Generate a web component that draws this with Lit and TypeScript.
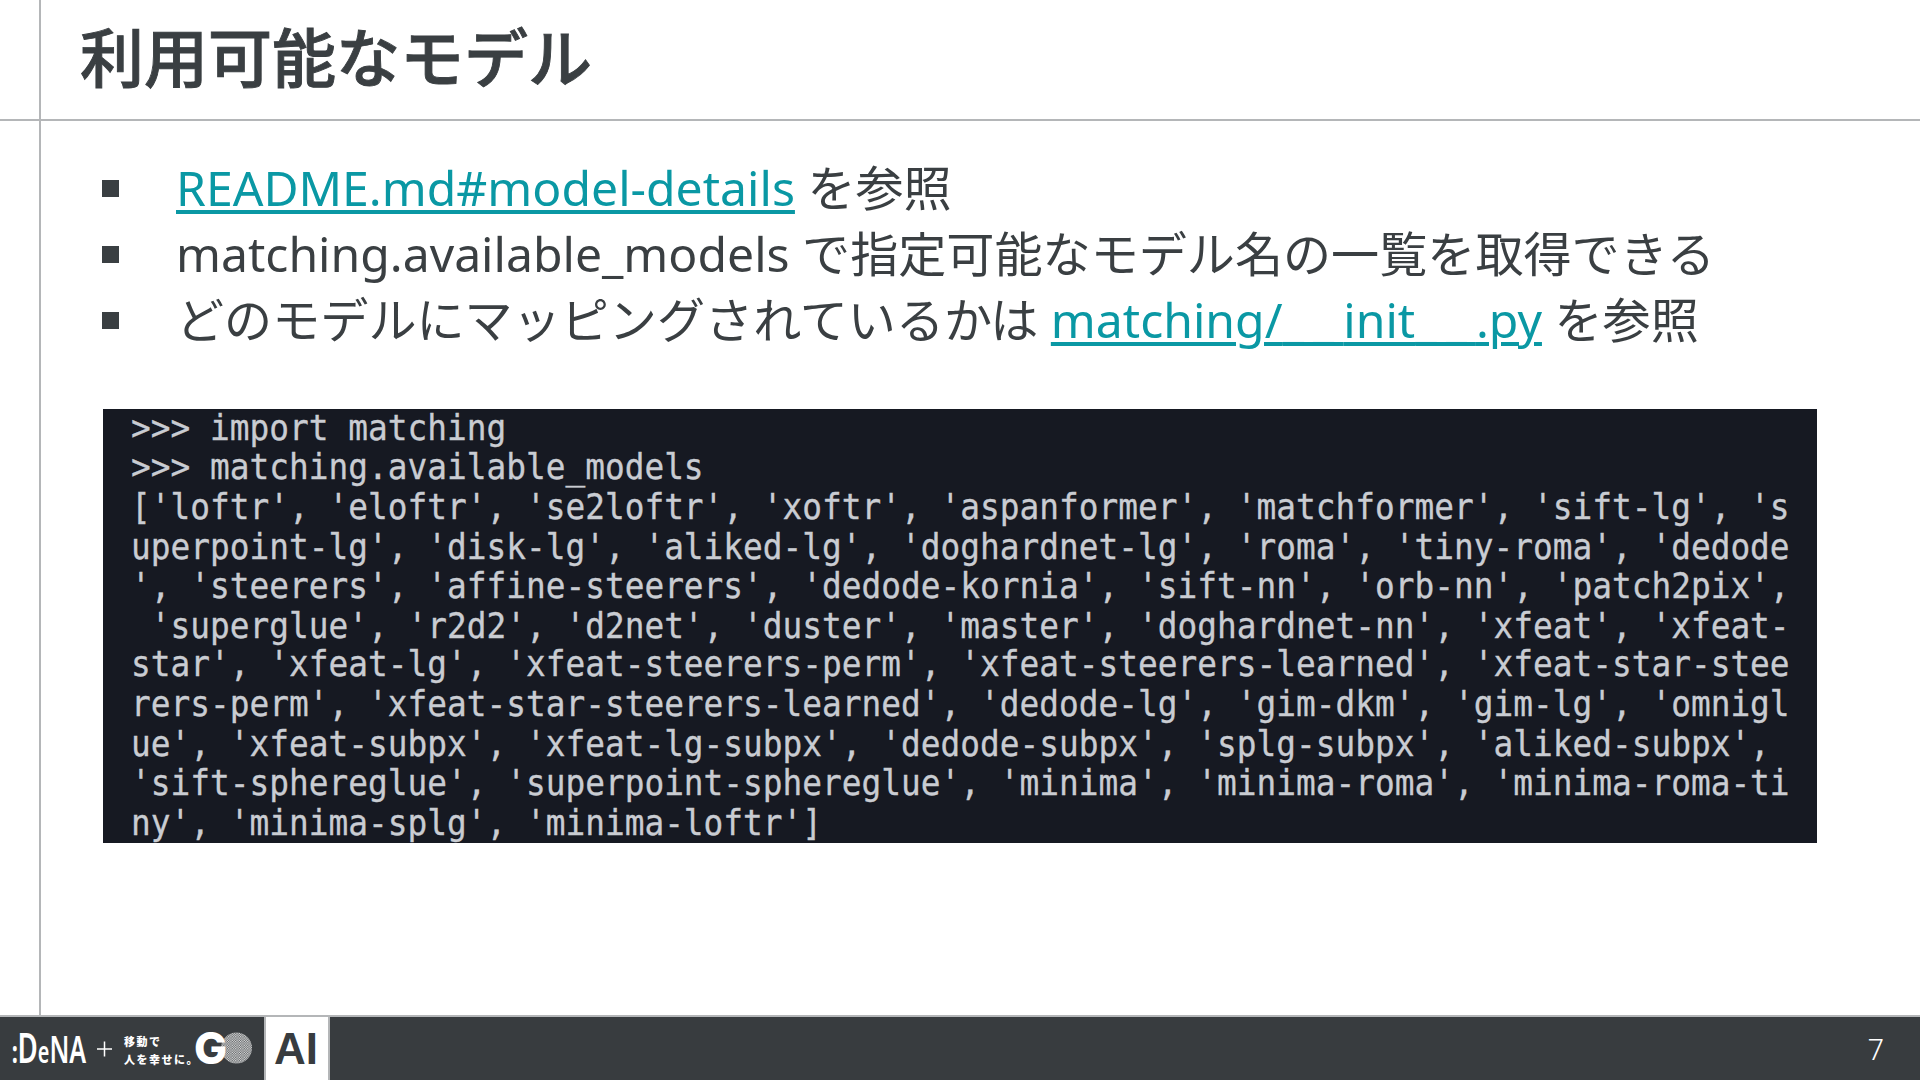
import { LitElement, html, css } from "lit";
import { customElement } from "lit/decorators.js";

const TERMINAL = [
  ">>> import matching",
  ">>> matching.available_models",
  "['loftr', 'eloftr', 'se2loftr', 'xoftr', 'aspanformer', 'matchformer', 'sift-lg', 's",
  "uperpoint-lg', 'disk-lg', 'aliked-lg', 'doghardnet-lg', 'roma', 'tiny-roma', 'dedode",
  "', 'steerers', 'affine-steerers', 'dedode-kornia', 'sift-nn', 'orb-nn', 'patch2pix',",
  " 'superglue', 'r2d2', 'd2net', 'duster', 'master', 'doghardnet-nn', 'xfeat', 'xfeat-",
  "star', 'xfeat-lg', 'xfeat-steerers-perm', 'xfeat-steerers-learned', 'xfeat-star-stee",
  "rers-perm', 'xfeat-star-steerers-learned', 'dedode-lg', 'gim-dkm', 'gim-lg', 'omnigl",
  "ue', 'xfeat-subpx', 'xfeat-lg-subpx', 'dedode-subpx', 'splg-subpx', 'aliked-subpx',",
  "'sift-sphereglue', 'superpoint-sphereglue', 'minima', 'minima-roma', 'minima-roma-ti",
  "ny', 'minima-splg', 'minima-loftr']",
];

@customElement("app-root")
export class AppRoot extends LitElement {
  static styles = css`
    :host {
      display: flex;
      flex-direction: column;
      position: relative;
      width: 1920px;
      height: 1080px;
      overflow: hidden;
      background: #fff;
      color: #3a3f42;
      font-family: "Noto Sans", "Noto Sans CJK JP", sans-serif;
    }
    .vline {
      position: absolute;
      left: 39px;
      top: 0;
      width: 2px;
      height: 1015px;
      background: #b4b6b8;
    }
    .head {
      box-sizing: border-box;
      height: 121px;
      flex: none;
      border-bottom: 2px solid #b4b6b8;
      padding: 0 0 11px 80px;
      display: flex;
      align-items: center;
    }
    h1 {
      margin: 0;
      font: 500 64px/1 "Noto Sans CJK JP", sans-serif;
      -webkit-text-stroke: 0.9px #3a3f42;
    }
    .main {
      flex: 1;
      min-height: 0;
      padding: 34px 103px 0;
    }
    ul {
      list-style: none;
      margin: 0;
      padding: 0 0 3px;
      height: 251px;
    }
    li {
      display: flex;
      align-items: center;
      height: 66px;
      font-size: 48.1px;
      line-height: 66px;
      white-space: pre;
    }
    .sq {
      width: 17px;
      height: 17px;
      flex: none;
      margin: 0 57px 0 -1px;
      background: #3a3f42;
    }
    a {
      color: #0a98a4;
      text-decoration: underline;
      text-decoration-thickness: 4px;
      text-underline-offset: 4px;
    }
    .us {
      letter-spacing: 9px;
    }
    .term {
      box-sizing: border-box;
      width: 1714px;
      height: 434px;
      background: #161922;
      color: #c9ccd2;
      padding-left: 28px;
    }
    .term-text {
      font: 32.8px/35.9px "DejaVu Sans Mono", monospace;
      white-space: pre;
      transform: scaleY(1.1);
      transform-origin: 0 0;
      -webkit-text-stroke: 0.3px #c9ccd2;
    }
    .foot {
      box-sizing: border-box;
      flex: none;
      height: 65px;
      border-top: 2px solid #b4b6b8;
      background: #383c3f;
      color: #fff;
      display: flex;
      align-items: center;
    }
    .logo {
      width: 264px;
      height: 63px;
      flex: none;
      display: block;
    }
    .ai {
      box-sizing: border-box;
      width: 66px;
      height: 63px;
      flex: none;
      padding-right: 2px;
      background: #fff;
      border: solid #b4b6b8;
      border-width: 0 2px;
      color: #383c3f;
      font: 700 44px/63px "Liberation Sans", sans-serif;
      text-align: center;
    }
    .page {
      margin-left: auto;
      margin-right: 36px;
      font: 300 29px/1 "Noto Sans", sans-serif;
    }
  `;

  render() {
    return html`
      <div class="vline"></div>
      <header class="head"><h1>利用可能なモデル</h1></header>
      <main class="main">
        <ul>
          <li><span class="sq"></span><span><a>README.md#model-details</a> を参照</span></li>
          <li><span class="sq"></span><span>matching.available_models で指定可能なモデル名の一覧を取得できる</span></li>
          <li><span class="sq"></span><span>どのモデルにマッピングされているかは <a>matching/<span class="us">__</span>init<span class="us">__</span>.py</a> を参照</span></li>
        </ul>
        <div class="term"><div class="term-text">${TERMINAL.join("\n")}</div></div>
      </main>
      <footer class="foot">
        <svg class="logo" viewBox="0 0 264 63" aria-hidden="true">
          <defs>
            <pattern id="dots" width="2.4" height="2.4" patternUnits="userSpaceOnUse">
              <rect width="2.4" height="2.4" fill="#55595c"></rect>
              <rect width="1.2" height="1.2" fill="#e6e6e6"></rect>
              <rect x="1.2" y="1.2" width="1.2" height="1.2" fill="#e6e6e6"></rect>
            </pattern>
          </defs>
          <g transform="scale(0.66 1)">
            <text x="18" y="46" fill="#fff" font-family="Noto Sans" font-weight="600" font-size="38"><tspan font-weight="800" font-size="30">:</tspan><tspan font-size="42">D</tspan><tspan font-size="30">e</tspan><tspan font-size="38">N</tspan><tspan font-size="38">A</tspan></text>
          </g>
          <path d="M97 32H112M104.500 24.500V39.500" stroke="#fff" stroke-width="1.500" fill="none"></path>
          <text x="124" y="29" fill="#fff" font-family="Noto Sans CJK JP" font-weight="900" font-size="11" letter-spacing="1.500">移動で</text>
          <text x="124" y="47" fill="#fff" font-family="Noto Sans CJK JP" font-weight="900" font-size="11" letter-spacing="1.500">人を幸せに。</text>
          <circle cx="236.500" cy="31" r="15.500" fill="url(#dots)"></circle>
          <text x="194" y="47" fill="#fff" font-family="Inter" font-weight="800" font-size="44">G</text>
        </svg>
        <div class="ai">AI</div>
        <div class="page">7</div>
      </footer>
    `;
  }
}
